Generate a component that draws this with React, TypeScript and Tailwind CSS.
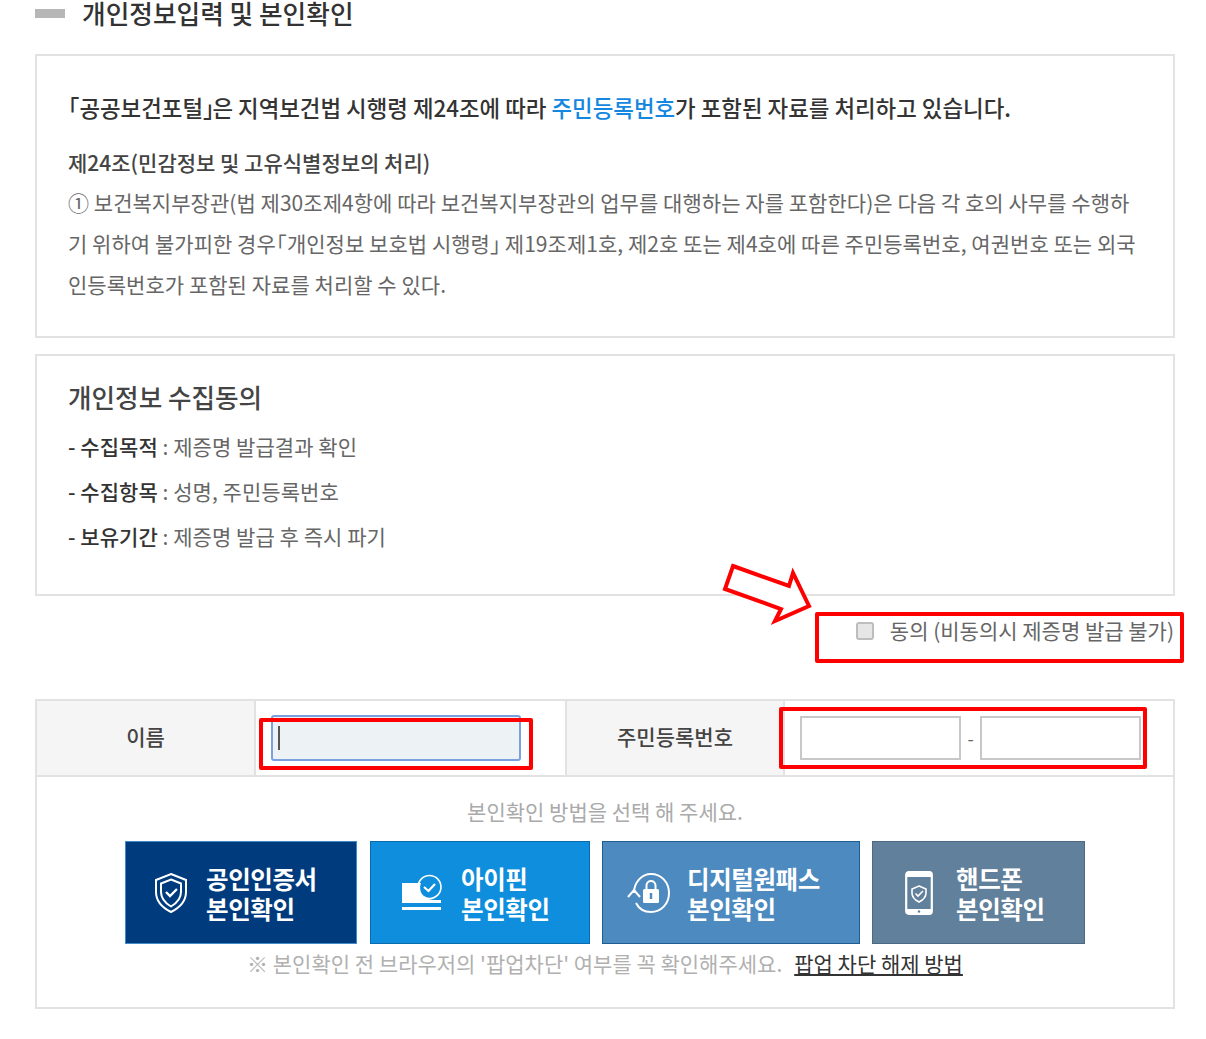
import React from "react";

function ShieldIcon() {
  return (
    <svg width="36" height="42" viewBox="0 0 36 42" fill="none" stroke="white" className="shrink-0">
      <path d="M18 2 L33 8 V20 C33 30 26 36 18 40 C10 36 3 30 3 20 V8 Z" strokeWidth="2" />
      <path d="M18 7.5 L28 11.5 V20 C28 27 23 31.5 18 34.5 C13 31.5 8 27 8 20 V11.5 Z" strokeWidth="2" />
      <path d="M13 20 L17 24 L24 17" strokeWidth="2.4" />
    </svg>
  );
}

function IpinIcon() {
  return (
    <svg width="42" height="38" viewBox="0 0 42 38" className="shrink-0">
      <path d="M1 9 H20 C17 17 22 26 34 26 H40 V29 H1 Z" fill="white" />
      <rect x="1" y="33" width="39" height="3" fill="white" />
      <circle cx="28.5" cy="13" r="11.5" fill="none" stroke="white" strokeWidth="1.6" />
      <path d="M23 13 L27.5 17 L34 10" fill="none" stroke="white" strokeWidth="2.2" />
    </svg>
  );
}

function OnePassIcon() {
  return (
    <svg width="44" height="42" viewBox="0 0 44 42" fill="none" className="shrink-0">
      <path d="M7 21 C7 10 15 2 24 2 C34 2 42 10 42 21 C42 32 34 40 24 40 C17 40 12 37 9 31" stroke="white" strokeWidth="2" />
      <path d="M1 25 L7 18 L13 25" stroke="white" strokeWidth="2" />
      <path d="M19.5 17 V13.5 C19.5 7.5 28.5 7.5 28.5 13.5 V17" stroke="white" strokeWidth="2" />
      <rect x="16" y="17" width="16" height="14" rx="1.5" fill="white" />
      <rect x="22.8" y="21" width="2.4" height="6" fill="#4c8abf" />
    </svg>
  );
}

function PhoneIcon() {
  return (
    <svg width="28" height="44" viewBox="0 0 28 44" fill="none" className="shrink-0">
      <rect x="1.2" y="1.2" width="25.6" height="41.6" rx="2.5" stroke="white" strokeWidth="2.2" />
      <rect x="1" y="1" width="26" height="5" fill="white" />
      <rect x="1" y="38" width="26" height="5" fill="white" />
      <circle cx="14" cy="40.5" r="1.2" fill="#61809b" />
      <path d="M14 15 L21 18 V22 C21 26 18 29 14 31 C10 29 7 26 7 22 V18 Z" stroke="white" strokeWidth="1.6" />
      <path d="M10.5 22.5 L13 25 L18 20" stroke="white" strokeWidth="1.6" />
    </svg>
  );
}

function AuthButton({
  className,
  icon,
  top,
  gap,
}: {
  className: string;
  icon: React.ReactNode;
  top: string;
  gap: string;
}) {
  return (
    <div className={className}>
      {icon}
      <div className={gap}>
        <div>{top}</div>
        <div>본인확인</div>
      </div>
    </div>
  );
}

export default function App() {
  return (
    <div className="relative w-[1206px] h-[1039px] overflow-hidden bg-white text-[#555] font-['Noto_Sans_CJK_KR','Noto_Sans',sans-serif]">
      <div className="ml-[35px] w-[1140px]">
        <div className="flex items-center h-[27px]">
          <div className="w-[30px] h-[9px] bg-[#b7b7b7]" />
          <h2 className="ml-[17px] mb-[3px] text-[25.7px] leading-[27px] font-medium text-[#333]">개인정보입력 및 본인확인</h2>
        </div>

        <section className="mt-[27px] h-[284px] border-2 border-[#e2e2e2] pl-[31px] pr-[10px] pt-[34px]">
          <p className="text-[22.4px] leading-[34px] font-medium text-[#333] whitespace-nowrap">
            <span className="ml-[-11px]">「</span>공공보건포털<span className="mr-[-13px]">」</span>은 지역보건법 시행령 제24조에 따라 <span className="text-[#1487e0]">주민등록번호</span>가 포함된 자료를 처리하고 있습니다.
          </p>
          <p className="mt-[21px] text-[21px] leading-[34px] font-medium text-[#444]">제24조(민감정보 및 고유식별정보의 처리)</p>
          <p className="mt-[3px] text-[21px] tracking-[0.04px] leading-[41px] text-[#666] whitespace-nowrap">
            ① 보건복지부장관(법 제30조제4항에 따라 보건복지부장관의 업무를 대행하는 자를 포함한다)은 다음 각 호의 사무를 수행하
            <br />
            기 위하여 불가피한 경우<span className="ml-[-10px]">「</span>개인정보 보호법 시행령<span className="mr-[-11px]">」</span> 제19조제1호, 제2호 또는 제4호에 따른 주민등록번호, 여권번호 또는 외국
            <br />
            인등록번호가 포함된 자료를 처리할 수 있다.
          </p>
        </section>

        <section className="mt-[16px] h-[242px] border-2 border-[#e2e2e2] pl-[31px] pt-[23px]">
          <h3 className="text-[25.6px] leading-[36px] font-medium text-[#444]">개인정보 수집동의</h3>
          <ul className="mt-[9px] text-[21px] tracking-[0.05px] leading-[45px] text-[#666]">
            <li><b className="font-medium text-[#333]">- 수집목적</b> : 제증명 발급결과 확인</li>
            <li><b className="font-medium text-[#333]">- 수집항목</b> : 성명, 주민등록번호</li>
            <li><b className="font-medium text-[#333]">- 보유기간</b> : 제증명 발급 후 즉시 파기</li>
          </ul>
        </section>

        <div className="flex items-center justify-end h-[28px] mt-[21px] pr-[1px] text-[21px] text-[#666]">
          <span className="w-[18px] h-[18px] rounded-[3px] border-2 border-[#bdbdbd] bg-[#e6e6e6]" />
          <span className="ml-[16px]">동의 (비동의시 제증명 발급 불가)</span>
        </div>

        <section className="mt-[54px] h-[310px] border-2 border-[#e2e2e2]">
          <div className="flex h-[76px] border-b-2 border-[#e2e2e2]">
            <div className="w-[219px] pb-[2px] flex items-center justify-center bg-[#f5f5f5] border-r-2 border-[#e2e2e2] text-[21px] font-medium text-[#444]">이름</div>
            <div className="w-[309px] flex items-center pl-[15px]">
              <div className="w-[250px] h-[46px] flex items-center pl-[5px] rounded-[3px] border-2 border-[#7ba0e0] bg-[#edf3f5]">
                <span className="w-[2px] h-[24px] bg-[#555]" />
              </div>
            </div>
            <div className="w-[220px] pb-[2px] flex items-center justify-center bg-[#f5f5f5] border-x-2 border-[#e2e2e2] text-[21px] font-medium text-[#444]">주민등록번호</div>
            <div className="flex flex-1 items-center pl-[15px]">
              <div className="w-[161px] h-[44px] border-2 border-[#c8c8c8]" />
              <span className="w-[19px] text-center text-[18px] text-[#666]">-</span>
              <div className="w-[161px] h-[44px] border-2 border-[#c8c8c8]" />
            </div>
          </div>

          <p className="mt-[16px] text-center text-[21px] leading-[36px] text-[#aaa]">본인확인 방법을 선택 해 주세요.</p>

          <div className="mt-[12px] ml-[88px] flex gap-[12px] text-[24.5px] leading-[30px] font-semibold text-white tracking-[-0.4px]">
            <AuthButton
              className="w-[232px] h-[103px] flex items-center pl-[27px] bg-[#003c7d] border border-[#3f8cc9]"
              icon={<ShieldIcon />}
              top="공인인증서"
              gap="ml-[17px] pt-[2px]"
            />
            <AuthButton
              className="ml-[1px] w-[220px] h-[103px] flex items-center pl-[30px] bg-[#0e8edc] border border-[#0a6cad]"
              icon={<IpinIcon />}
              top="아이핀"
              gap="ml-[18px] pt-[2px]"
            />
            <AuthButton
              className="w-[258px] h-[103px] flex items-center pl-[24px] bg-[#4c8abf] border border-[#1f5f8f]"
              icon={<OnePassIcon />}
              top="디지털원패스"
              gap="ml-[16px] pt-[2px]"
            />
            <AuthButton
              className="w-[213px] h-[103px] flex items-center pl-[32px] bg-[#61809b] border border-[#4d6a84]"
              icon={<PhoneIcon />}
              top="핸드폰"
              gap="ml-[23px] pt-[2px]"
            />
          </div>

          <p className="mt-[1px] text-center text-[21px] leading-[36px] text-[#b0b0b0]">
            ※ 본인확인 전 브라우저의 '팝업차단' 여부를 꼭 확인해주세요.
            <a className="ml-[12px] text-[#333] underline underline-offset-2">팝업 차단 해제 방법</a>
          </p>
        </section>
      </div>

      <div className="absolute left-[815px] top-[612px] w-[369px] h-[51px] border-4 border-[#ff0000] rounded-[2px]" />
      <div className="absolute left-[259px] top-[718px] w-[274px] h-[52px] border-4 border-[#ff0000] rounded-[2px]" />
      <div className="absolute left-[779px] top-[707px] w-[368px] h-[62px] border-4 border-[#ff0000] rounded-[2px]" />
      <svg className="absolute left-[720px] top-[560px]" width="95" height="70" viewBox="720 560 95 70" fill="none">
        <polygon points="733,566 789,586 793,573 809,606 775,621 781,609 725,589" stroke="#ff0000" strokeWidth="4" fill="white" />
      </svg>
    </div>
  );
}
